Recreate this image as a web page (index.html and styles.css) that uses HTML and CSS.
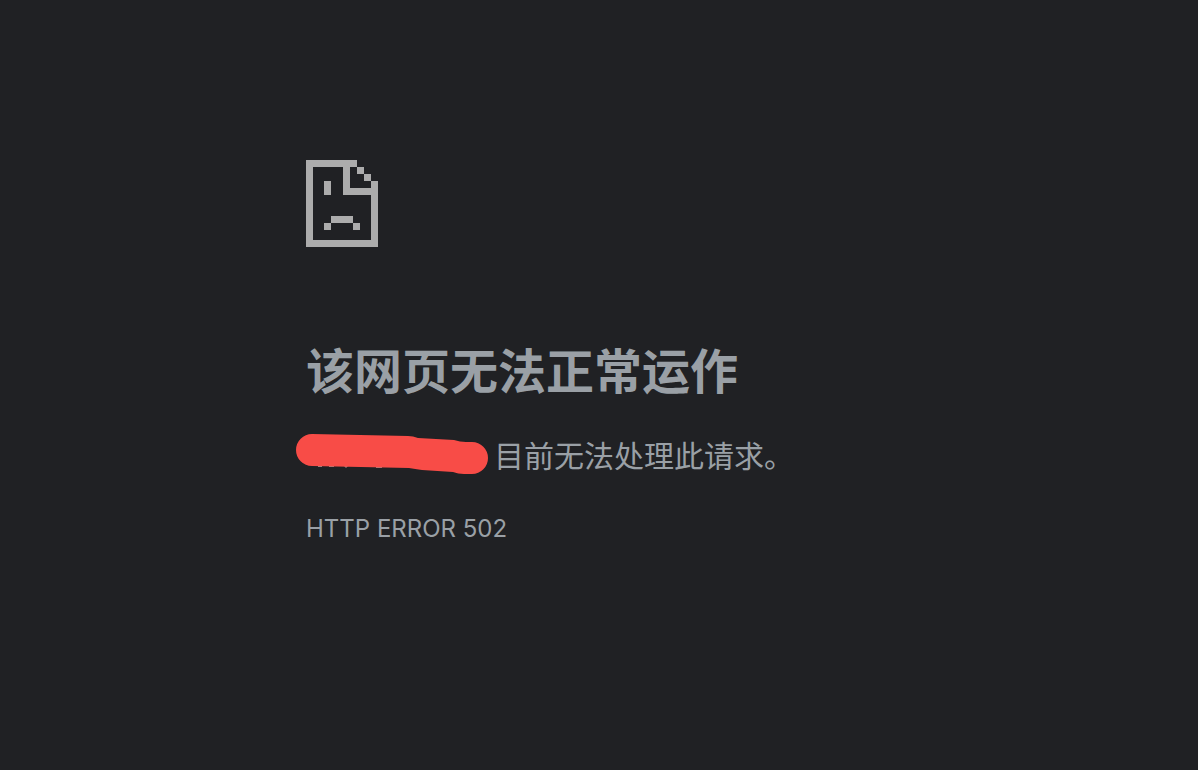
FILE: index.html
```
<!DOCTYPE html>
<html lang="zh-CN">
<head>
    <meta charset="UTF-8" />
    <meta name="viewport" content="width=device-width, initial-scale=1">
    <title>该网页无法正常运作</title>
    <link rel="stylesheet" href="styles.css">
</head>
<body>
<main class="error-page">
    <svg class="icon" viewBox="0 0 72 87" aria-hidden="true">
        <!-- 文件外框和折角 -->
        <path d="M0 0H51V7H44V28H65V21H72V87H0ZM7 7V80H65V35H37V7Z"/>
        <path d="M51 7h7v7h-7zM58 14h7v7h-7z"/>
        <!-- 眼睛和嘴 -->
        <path d="M18 21h7v14h-7zM25 56h22v7h-22zM18 63h7v7h-7zM47 63h7v7h-7z"/>
    </svg>
    <h1>该网页无法正常运作</h1>
    <p class="summary">
        <svg class="marker" viewBox="0 0 192 40" aria-hidden="true">
            <path class="trace" d="M22 32h4v1h-4zM33 32h5v1h-5zM48 32h4l-2 2zM80 33h6v1h-6z"/>
            <path class="stroke" d="M16 0L112 2Q117 2 122 4L158 6Q164 8 170 8H176A16 16 0 0 1 176 40H168Q162 40 157 38L126 36Q119 35 113 34L16 32A16 16 0 0 1 16 0Z"/>
        </svg>
        <span>目前无法处理此请求。</span>
    </p>
    <div class="error-code">HTTP ERROR 502</div>
</main>
</body>
</html>
```

FILE: styles.css
```
* {margin:0; padding:0;}
body {
    background-color: #202124;
    color: #9aa0a6;
    font-family: Inter, "Noto Sans CJK SC", sans-serif;
}
.error-page {
    max-width: 586px;
    margin: 0 auto;
    padding: 160px 24px 0;
}
.icon {
    display: block;
    width: 72px;
    height: 87px;
    fill: #acacac;
    fill-rule: evenodd;
    shape-rendering: crispEdges;
}
h1 {
    margin-top: 95px;
    font-size: 48px;
    font-weight: 700;
    line-height: 60px;
}
.summary {
    display: flex;
    align-items: flex-start;
    margin-top: 32px;
    font-size: 30px;
    line-height: 44px;
}
/* 涂抹从文字左侧稍微伸出一点 */
.marker {
    flex: none;
    width: 192px;
    height: 40px;
    margin: 0 6px 0 -10px;
}
.stroke {
    fill: #f84c47;
}
.trace {
    fill: #9c8583;
}
.error-code {
    margin-top: 35px;
    font-size: 24px;
    line-height: 32px;
}
```
